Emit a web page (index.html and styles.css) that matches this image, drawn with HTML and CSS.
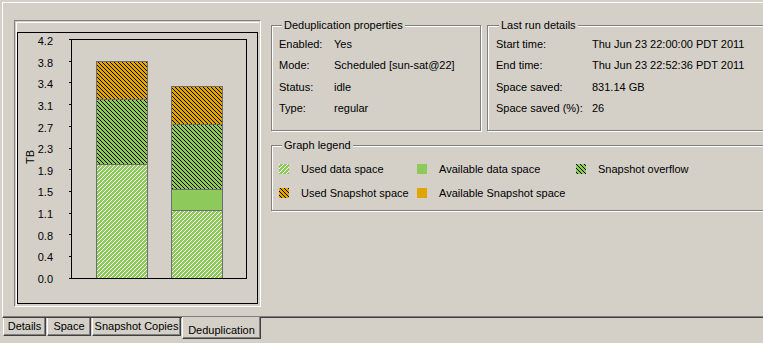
FILE: index.html
```
<!DOCTYPE html>
<html lang="en">

<head>
    <meta charset="UTF-8">
    <meta name="viewport" content="width=device-width, initial-scale=1.0">
    <title>Deduplication</title>
    <link rel="stylesheet" href="styles.css">
</head>

<body>

    <div class="page">
        <div class="chartPanel">
            <div class="chartInner">
                <div class="chartFrame">
                    <div class="axisTitle">TB</div>
                    <div class="yLabels">
                        <span>4.2</span><span>3.8</span><span>3.4</span><span>3.1</span>
                        <span>2.7</span><span>2.3</span><span>1.9</span><span>1.5</span>
                        <span>1.1</span><span>0.8</span><span>0.4</span><span>0.0</span>
                    </div>
                    <div class="ticks">
                        <span></span><span></span><span></span><span></span><span></span><span></span>
                        <span></span><span></span><span></span><span></span><span></span><span></span>
                    </div>
                    <div class="plot">
                        <div class="bar">
                            <div class="seg snapUsed" style="height: 38px"></div>
                            <div class="seg overflow" style="height: 65px"></div>
                            <div class="seg dataUsed" style="height: 114px"></div>
                        </div>
                        <div class="bar">
                            <div class="seg snapUsed" style="height: 38px"></div>
                            <div class="seg overflow" style="height: 65px"></div>
                            <div class="seg dataFree" style="height: 21px"></div>
                            <div class="seg dataUsed" style="height: 68px"></div>
                        </div>
                    </div>
                </div>
            </div>
        </div>

        <div class="info">
            <div class="infoTop">
                <div class="group props">
                    <div class="groupTitle">Deduplication properties</div>
                    <div class="rows">
                        <span>Enabled:</span><span>Yes</span>
                        <span>Mode:</span><span>Scheduled [sun-sat@22]</span>
                        <span>Status:</span><span>idle</span>
                        <span>Type:</span><span>regular</span>
                    </div>
                </div>
                <div class="group lastRun">
                    <div class="groupTitle">Last run details</div>
                    <div class="rows">
                        <span>Start time:</span><span>Thu Jun 23 22:00:00 PDT 2011</span>
                        <span>End time:</span><span>Thu Jun 23 22:52:36 PDT 2011</span>
                        <span>Space saved:</span><span>831.14 GB</span>
                        <span>Space saved (%):</span><span>26</span>
                    </div>
                </div>
            </div>

            <div class="group legend">
                <div class="groupTitle">Graph legend</div>
                <div class="legendGrid">
                    <div class="item"><span class="swatch dataUsed"></span>Used data space</div>
                    <div class="item"><span class="swatch dataFree"></span>Available data space</div>
                    <div class="item"><span class="swatch overflow"></span>Snapshot overflow</div>
                    <div class="item"><span class="swatch snapUsed"></span>Used Snapshot space</div>
                    <div class="item"><span class="swatch snapFree"></span>Available Snapshot space</div>
                </div>
            </div>
        </div>
    </div>

    <div class="tabs">
        <div class="tab tabDetails">Details</div>
        <div class="tab tabSpace">Space</div>
        <div class="tab tabCopies">Snapshot Copies</div>
        <div class="tab tabDedup selected">Deduplication</div>
    </div>

</body>

</html>
```

FILE: styles.css
```
body {
    margin: 0;
    width: 763px;
    height: 343px;
    overflow: hidden;
    background-color: #d4d0c8;
    font: 11px "Liberation Sans", Arial, sans-serif;
    color: #000;
}

.page {
    display: flex;
    margin: 2px 0 0 2px;
    width: 761px;
    height: 316px;
    box-sizing: border-box;
    padding: 17px 0 0 11px;
    border-top: 1px solid #fff;
    border-left: 1px solid #fff;
    border-bottom: 1px solid #404040;
    box-shadow: inset 0 -1px #808080;
}

/* chart */

.chartPanel {
    width: 247px;
    height: 287px;
    flex-shrink: 0;
    box-sizing: border-box;
    padding: 1px;
    border: 1px solid;
    border-color: #808080 #fff #fff #808080;
}

.chartInner {
    height: 100%;
    box-sizing: border-box;
    padding-top: 9px;
    border-top: 1px solid #fff;
    border-left: 1px solid #fff;
}

.chartFrame {
    display: flex;
    align-items: flex-start;
    width: 241px;
    height: 272px;
    box-sizing: border-box;
    padding-top: 6px;
    border: 1px solid #000;
}

.axisTitle {
    width: 11px;
    margin: 111px 0 0 7px;
    line-height: 11px;
    writing-mode: vertical-rl;
    transform: rotate(180deg);
}

.yLabels {
    display: flex;
    flex-direction: column;
    justify-content: space-between;
    width: 17px;
    height: 250px;
    margin: -4px 16px 0 0;
    line-height: 12px;
    text-align: right;
}

.ticks {
    display: flex;
    flex-direction: column;
    justify-content: space-between;
    width: 2px;
    height: 240px;
}

.ticks span {
    height: 1px;
    background-color: #000;
}

.plot {
    display: flex;
    align-items: flex-end;
    gap: 23px;
    width: 176px;
    height: 240px;
    box-sizing: border-box;
    padding-left: 24px;
    border: 1px solid #000;
}

.bar {
    display: flex;
    flex-direction: column;
    width: 52px;
    box-sizing: border-box;
    border-left: 1px solid #6e6e6e;
    border-right: 1px solid #6e6e6e;
}

.seg {
    box-sizing: border-box;
    border-top: 1px solid #6e6e6e;
}

/* fills: 4px pixel tiles, anchored to the window like GDI hatch brushes */

.dataUsed {
    background: #8ec95c url("data:image/svg+xml,%3Csvg xmlns='http://www.w3.org/2000/svg' width='4' height='4' shape-rendering='crispEdges'%3E%3Cpath fill='%23fff' d='M3 0h1v1H3zM2 1h1v1H2zM1 2h1v1H1zM0 3h1v1H0z'/%3E%3C/svg%3E") fixed;
}

.dataFree {
    background-color: #8ec95c;
}

.overflow {
    background: #8ec95c url("data:image/svg+xml,%3Csvg xmlns='http://www.w3.org/2000/svg' width='4' height='4' shape-rendering='crispEdges'%3E%3Cpath d='M0 0h1v1H0zM1 1h1v1H1zM2 2h1v1H2zM3 3h1v1H3z'/%3E%3C/svg%3E") fixed;
}

.snapUsed {
    background: #e2a400 url("data:image/svg+xml,%3Csvg xmlns='http://www.w3.org/2000/svg' width='4' height='4' shape-rendering='crispEdges'%3E%3Cpath d='M0 0h1v1H0zM1 1h1v1H1zM2 2h1v1H2zM3 3h1v1H3z'/%3E%3C/svg%3E") fixed;
}

.snapFree {
    background-color: #e2a400;
}

/* group boxes */

.info {
    display: flex;
    flex-direction: column;
    flex: 1;
    margin-left: 10px;
    padding-top: 5px;
}

.infoTop {
    display: flex;
    gap: 6px;
}

.group {
    box-sizing: border-box;
    border: 1px solid #808080;
    box-shadow: inset 1px 1px #fff, 1px 1px #fff;
}

.groupTitle {
    width: fit-content;
    margin: -7px 0 0 3px;
    padding: 0 2px;
    line-height: 13px;
    background-color: #d4d0c8;
}

.props {
    width: 210px;
    height: 106px;
    padding-left: 7px;
}

.lastRun {
    flex: 1;
    height: 106px;
    padding-left: 8px;
    border-right: none;
}

.rows {
    display: grid;
    grid-template-columns: 55px auto;
    grid-auto-rows: 21.5px;
    align-items: center;
    margin-top: 1px;
    white-space: nowrap;
}

.lastRun .rows {
    grid-template-columns: 96px auto;
}

.legend {
    height: 66px;
    margin-top: 14px;
    padding-left: 7px;
    border-right: none;
}

.legendGrid {
    display: grid;
    grid-template-columns: 138px 159px auto;
    grid-auto-rows: 24px;
    align-items: center;
    margin-top: 5px;
}

.item {
    display: flex;
    align-items: center;
    gap: 12px;
    white-space: nowrap;
}

.swatch {
    width: 10px;
    height: 10px;
}

/* tabs */

.tabs {
    display: flex;
    align-items: flex-start;
    padding-left: 3px;
}

.tab {
    height: 18px;
    box-sizing: border-box;
    margin-right: 1px;
    line-height: 16px;
    text-align: center;
    white-space: nowrap;
    border-left: 1px solid #fff;
    border-right: 1px solid #404040;
    border-bottom: 1px solid #404040;
    box-shadow: inset -1px -1px #808080;
}

.tabDetails { width: 43px; }
.tabSpace { width: 44px; }
.tabCopies { width: 89px; }

.tabDedup {
    width: 79px;
}

.tab.selected {
    height: 22px;
    margin-top: -1px;
    padding-top: 5px;
    background-color: #d4d0c8;
}
```
